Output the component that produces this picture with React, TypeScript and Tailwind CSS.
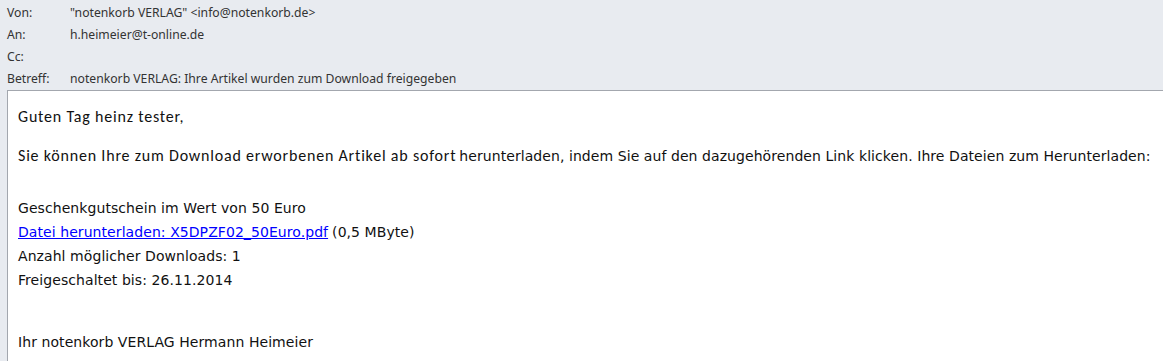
export default function App() {
  const hdr = "font-['Segoe_UI','Noto_Sans','Open_Sans',sans-serif] text-[12.2px] text-[#333]";
  const cal = "font-['Carlito','Calibri','Lato',sans-serif] text-[16px] tracking-[0.8px] text-[#111]";
  const ver = "font-['Verdana','DejaVu_Sans',sans-serif] text-[14px] tracking-[0.07px] text-[#111]";
  const rows: [string, string][] = [
    ["Von:", "\"notenkorb VERLAG\" <info@notenkorb.de>"],
    ["An:", "h.heimeier@t-online.de"],
    ["Cc:", ""],
    ["Betreff:", "notenkorb VERLAG: Ihre Artikel wurden zum Download freigegeben"],
  ];
  return (
    <div className="w-[1163px] h-[361px] overflow-hidden bg-[#e8ebf0] flex flex-col">
      <div className={`h-[90px] pt-[2px] flex flex-col ${hdr}`}>
        {rows.map(([l, v]) => (
          <div key={l} className="h-[22px] flex items-center">
            <span className="w-[70px] pl-[7px] shrink-0">{l}</span>
            <span>{v}</span>
          </div>
        ))}
      </div>
      <div className="flex-1 ml-[7px] bg-white border-t border-l border-[#a3a7ae] pl-[10px] pt-[14px]">
        <div className={`h-[24px] flex items-center ${cal}`}>Guten Tag heinz tester,</div>
        <div className="h-[24px] mt-[15px] flex items-center whitespace-nowrap">
          <span className={cal}>Sie können Ihre zum Download erworbenen Artikel ab sofort</span>
          <span className={`${ver} ml-[3px]`}>herunterladen, indem Sie auf den dazugehörenden Link klicken. Ihre Dateien zum Herunterladen:</span>
        </div>
        <div className={`mt-[28px] flex flex-col ${ver}`}>
          <div className="h-[24px] flex items-center">Geschenkgutschein im Wert von 50 Euro</div>
          <div className="h-[24px] flex items-center">
            <a href="#" className="text-[#0000ff] underline">Datei herunterladen: X5DPZF02_50Euro.pdf</a>
            <span className="ml-[4px]">(0,5 MByte)</span>
          </div>
          <div className="h-[24px] flex items-center">Anzahl möglicher Downloads: 1</div>
          <div className="h-[24px] flex items-center">Freigeschaltet bis: 26.11.2014</div>
          <div className="h-[24px] mt-[38px] flex items-center">Ihr notenkorb VERLAG Hermann Heimeier</div>
        </div>
      </div>
    </div>
  );
}
